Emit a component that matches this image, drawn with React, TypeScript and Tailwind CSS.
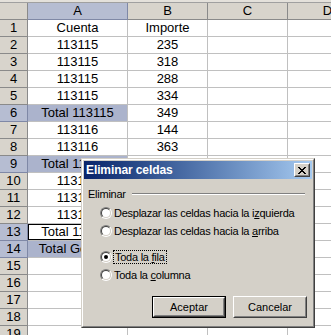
import React from "react";

type Row = { n: number; a: string; b: string; sel?: boolean; active?: boolean };

const rows: Row[] = [
  { n: 1, a: "Cuenta", b: "Importe" },
  { n: 2, a: "113115", b: "235" },
  { n: 3, a: "113115", b: "318" },
  { n: 4, a: "113115", b: "288" },
  { n: 5, a: "113115", b: "334" },
  { n: 6, a: "Total 113115", b: "349", sel: true },
  { n: 7, a: "113116", b: "144" },
  { n: 8, a: "113116", b: "363" },
  { n: 9, a: "Total 113116", b: "507", sel: true },
  { n: 10, a: "113117", b: "120" },
  { n: 11, a: "113117", b: "210" },
  { n: 12, a: "113117", b: "98" },
  { n: 13, a: "Total 113117", b: "428", sel: true, active: true },
  { n: 14, a: "Total General", b: "1284", sel: true },
  { n: 15, a: "", b: "" },
  { n: 16, a: "", b: "" },
  { n: 17, a: "", b: "" },
  { n: 18, a: "", b: "" },
  { n: 19, a: "", b: "" },
];

function Radio({ checked }: { checked?: boolean }) {
  return (
    <div className="w-[12px] h-[12px] rounded-full border border-t-[#808080] border-l-[#808080] border-b-white border-r-white shrink-0">
      <div className="w-full h-full rounded-full border border-t-[#404040] border-l-[#404040] border-b-[#d4d0c8] border-r-[#d4d0c8] bg-white flex items-center justify-center">
        {checked && <div className="w-[4px] h-[4px] rounded-full bg-black" />}
      </div>
    </div>
  );
}

function Btn({ label, def }: { label: string; def?: boolean }) {
  return (
    <div className={`w-[74px] h-[22px] ${def ? "border border-black" : ""}`}>
      <div className="w-full h-full border border-t-white border-l-white border-b-[#404040] border-r-[#404040]">
        <div className="w-full h-full border border-transparent border-b-[#808080] border-r-[#808080] flex items-center justify-center text-[11px] text-black">
          {label}
        </div>
      </div>
    </div>
  );
}

function CloseX() {
  const pts = [
    [0, 0], [1, 0], [6, 0], [7, 0],
    [1, 1], [2, 1], [5, 1], [6, 1],
    [2, 2], [3, 2], [4, 2], [5, 2],
    [3, 3], [4, 3],
    [2, 4], [3, 4], [4, 4], [5, 4],
    [1, 5], [2, 5], [5, 5], [6, 5],
    [0, 6], [1, 6], [6, 6], [7, 6],
  ];
  return (
    <svg width="8" height="7" viewBox="0 0 8 7" shapeRendering="crispEdges">
      {pts.map(([x, y], i) => (
        <rect key={i} x={x} y={y} width="1" height="1" fill="#000" />
      ))}
    </svg>
  );
}

export default function App() {
  const hdr = "h-[17px] border-r border-b text-center leading-[16px]";
  const cell = "h-[17px] border-r border-b border-[#c0c0c0] text-center leading-[16px] whitespace-nowrap overflow-hidden";
  return (
    <div className="relative w-[331px] h-[335px] overflow-hidden bg-white font-['Liberation_Sans',Arial,sans-serif] text-[13px] text-black">
      <div className="h-[3px] bg-[#e4e1db] border-b border-[#a0a0a0]" />
      <div className="grid grid-cols-[28px_100px_80px_80px_80px]">
        <div className={`${hdr} bg-[#d8d4cc] border-[#8a8a8a]`} />
        <div className={`${hdr} bg-[#b6bdd2] border-[#7f88a6]`}>A</div>
        <div className={`${hdr} bg-[#d8d4cc] border-[#8a8a8a]`}>B</div>
        <div className={`${hdr} bg-[#d8d4cc] border-[#8a8a8a]`}>C</div>
        <div className={`${hdr} bg-[#d8d4cc] border-[#8a8a8a]`}>D</div>
        {rows.map((r) => (
          <React.Fragment key={r.n}>
            <div
              className={`${hdr} ${
                r.sel ? "bg-[#b6bdd2] border-[#7f88a6]" : "bg-[#d8d4cc] border-[#8a8a8a]"
              }`}
            >
              {r.n}
            </div>
            <div
              className={`${cell} ${
                r.active
                  ? "bg-white shadow-[inset_0_0_0_1px_#000]"
                  : r.sel
                  ? "bg-[#abb3cc]"
                  : "bg-white"
              }`}
            >
              {r.a}
            </div>
            <div className={`${cell} bg-white`}>{r.b}</div>
            <div className={`${cell} bg-white`} />
            <div className={`${cell} bg-white`} />
          </React.Fragment>
        ))}
      </div>

      {/* Dialog */}
      <div className="absolute left-[81px] top-[158px] w-[234px] h-[170px] border border-t-[#d4d0c8] border-l-[#d4d0c8] border-b-[#404040] border-r-[#404040] font-['Liberation_Sans',Tahoma,sans-serif]">
        <div className="w-full h-full border border-t-white border-l-white border-b-[#808080] border-r-[#808080] bg-[#d4d0c8] p-[1px] flex flex-col">
          <div className="h-[18px] bg-gradient-to-r from-[#0a246a] to-[#a6caf0] flex items-center justify-between pl-[2px] pr-[2px]">
            <span className="text-white font-bold text-[12px] tracking-[-0.1px] leading-[14px]">Eliminar celdas</span>
            <div className="w-[16px] h-[14px] border border-t-white border-l-white border-b-[#404040] border-r-[#404040]">
              <div className="w-full h-full bg-[#d4d0c8] border border-transparent border-b-[#808080] border-r-[#808080] flex items-center justify-center">
                <CloseX />
              </div>
            </div>
          </div>

          <div className="text-[11px] tracking-[-0.25px] leading-[13px]">
            <div className="mt-[8px] h-[14px] flex items-center pl-[4px] pr-[7px]">
              <span>Eliminar</span>
              <div className="flex-1 ml-[6px] h-[2px] border-t border-[#808080] border-b border-b-white" />
            </div>

            <div className="mt-[3px] pl-[16px] flex flex-col">
              <div className="h-[18px] flex items-center gap-[2px]">
                <Radio />
                <span>
                  Desplazar las celdas hacia la i<u className="underline-offset-1">z</u>quierda
                </span>
              </div>
              <div className="h-[18px] flex items-center gap-[2px]">
                <Radio />
                <span>
                  Desplazar las celdas hacia la <u className="underline-offset-1">a</u>rriba
                </span>
              </div>
              <div className="mt-[8px] h-[18px] flex items-center gap-[1px]">
                <Radio checked />
                <span className="border border-dotted border-black px-[1px] leading-[12px]">
                  Toda la <u className="underline-offset-1">f</u>ila
                </span>
              </div>
              <div className="h-[18px] flex items-center gap-[2px]">
                <Radio />
                <span>
                  Toda la <u className="underline-offset-1">c</u>olumna
                </span>
              </div>
            </div>
          </div>

          <div className="mt-[12px] flex justify-end gap-[7px] pr-[5px]">
            <Btn label="Aceptar" def />
            <Btn label="Cancelar" />
          </div>
        </div>
      </div>
    </div>
  );
}
